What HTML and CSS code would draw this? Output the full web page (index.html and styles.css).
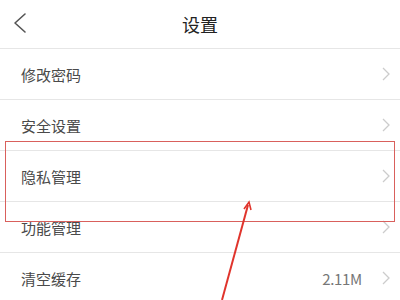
FILE: index.html
```html
<!DOCTYPE html>
<html lang="zh-CN">
  <head>
    <meta charset="UTF-8" />
    <meta name="viewport" content="width=device-width, initial-scale=1.0" />
    <title>设置</title>
    <link rel="stylesheet" href="styles.css">
  </head>
  <body>
    <div class="page">
      <div class="header">
        <svg class="back" width="14" height="22" viewBox="0 0 14 22">
          <polyline points="12,2 2,11 12,20" fill="none" stroke="#555" stroke-width="1.6" stroke-linecap="round" stroke-linejoin="round" />
        </svg>
        <div class="title">设置</div>
      </div>
      <div class="list">
        <div class="row">
          <span class="label">修改密码</span>
          <span class="right"><svg class="chev" width="10" height="14" viewBox="0 0 10 14"><polyline points="2,1 8,7 2,13" fill="none" stroke="#ccc" stroke-width="1.3" /></svg></span>
        </div>
        <div class="row">
          <span class="label">安全设置</span>
          <span class="right"><svg class="chev" width="10" height="14" viewBox="0 0 10 14"><polyline points="2,1 8,7 2,13" fill="none" stroke="#ccc" stroke-width="1.3" /></svg></span>
        </div>
        <div class="row">
          <span class="label">隐私管理</span>
          <span class="right"><svg class="chev" width="10" height="14" viewBox="0 0 10 14"><polyline points="2,1 8,7 2,13" fill="none" stroke="#ccc" stroke-width="1.3" /></svg></span>
        </div>
        <div class="row">
          <span class="label">功能管理</span>
          <span class="right"><svg class="chev" width="10" height="14" viewBox="0 0 10 14"><polyline points="2,1 8,7 2,13" fill="none" stroke="#ccc" stroke-width="1.3" /></svg></span>
        </div>
        <div class="row">
          <span class="label">清空缓存</span>
          <span class="right"><span class="value">2.11M</span><svg class="chev" width="10" height="14" viewBox="0 0 10 14"><polyline points="2,1 8,7 2,13" fill="none" stroke="#ccc" stroke-width="1.3" /></svg></span>
        </div>
      </div>

      <!-- annotation -->
      <div class="highlight"></div>
      <svg class="arrow" width="400" height="300" viewBox="0 0 400 300">
        <line x1="222" y1="300" x2="248" y2="205" stroke="#e0342c" stroke-width="2" />
        <polyline points="244,209 249,202 251,210" fill="none" stroke="#e0342c" stroke-width="1.6" />
      </svg>
    </div>
  </body>
</html>
```

FILE: styles.css
```css
body {
  margin: 0;
  background: #fff;
  font-family: "Noto Sans CJK SC", "Noto Sans", sans-serif;
  overflow: hidden;
}
.page {
  position: relative;
  width: 400px;
  height: 300px;
  overflow: hidden;
}
.header {
  position: relative;
  height: 48px;
  display: flex;
  align-items: center;
  justify-content: center;
  border-bottom: 1px solid #e6e6e6;
}
.back {
  position: absolute;
  left: 13px;
  top: 12px;
}
.title {
  font-size: 18px;
  color: #222;
}
.row {
  height: 50px;
  display: flex;
  align-items: center;
  justify-content: space-between;
  padding: 0 9px 0 21px;
  border-bottom: 1px solid #e6e6e6;
}
.label {
  font-size: 15px;
  color: #4a4a4a;
}
.right {
  display: flex;
  align-items: center;
}
.value {
  font-size: 15px;
  color: #777;
  margin-right: 19px;
  letter-spacing: -0.3px;
}
.chev {
  display: block;
}
.highlight {
  position: absolute;
  left: 5px;
  top: 141px;
  width: 388px;
  height: 79px;
  border: 1.5px solid #d9605c;
}
.arrow {
  position: absolute;
  left: 0;
  top: 0;
}
```
